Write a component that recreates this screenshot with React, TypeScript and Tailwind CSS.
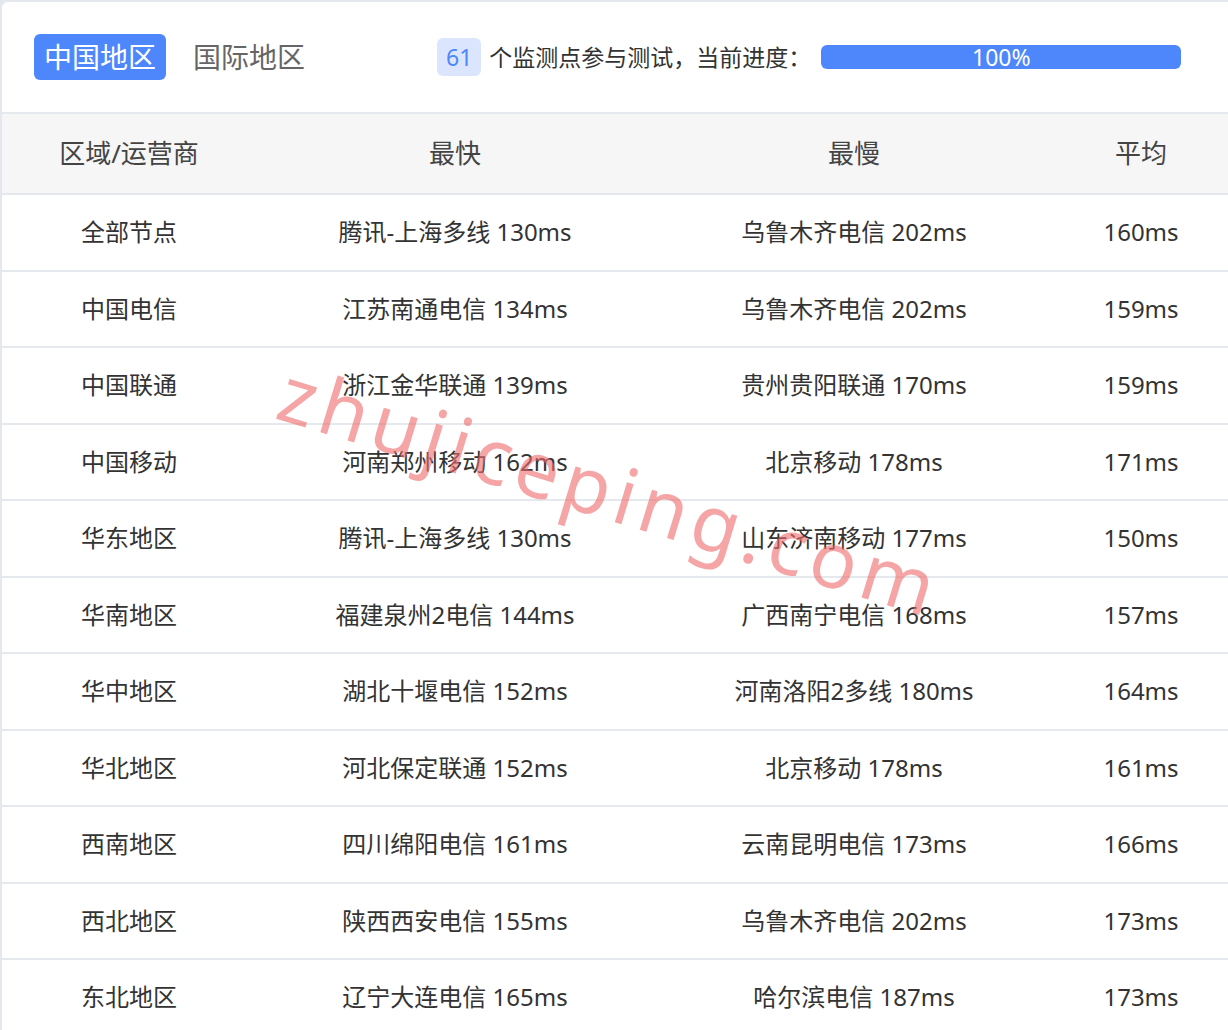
const rows = [
  ["全部节点", "腾讯-上海多线 130ms", "乌鲁木齐电信 202ms", "160ms"],
  ["中国电信", "江苏南通电信 134ms", "乌鲁木齐电信 202ms", "159ms"],
  ["中国联通", "浙江金华联通 139ms", "贵州贵阳联通 170ms", "159ms"],
  ["中国移动", "河南郑州移动 162ms", "北京移动 178ms", "171ms"],
  ["华东地区", "腾讯-上海多线 130ms", "山东济南移动 177ms", "150ms"],
  ["华南地区", "福建泉州2电信 144ms", "广西南宁电信 168ms", "157ms"],
  ["华中地区", "湖北十堰电信 152ms", "河南洛阳2多线 180ms", "164ms"],
  ["华北地区", "河北保定联通 152ms", "北京移动 178ms", "161ms"],
  ["西南地区", "四川绵阳电信 161ms", "云南昆明电信 173ms", "166ms"],
  ["西北地区", "陕西西安电信 155ms", "乌鲁木齐电信 202ms", "173ms"],
  ["东北地区", "辽宁大连电信 165ms", "哈尔滨电信 187ms", "173ms"],
];

const cols = "grid grid-cols-[254px_398px_400px_1fr] items-center text-center";

export default function App() {
  return (
    <div
      className="relative h-[1030px] w-[1228px] overflow-hidden bg-[#e4e8ee] pl-[2px] pt-[2px]"
      style={{ fontFamily: '"Noto Sans", "Noto Sans CJK SC", sans-serif' }}
    >
      <div className="h-full rounded-tl-md bg-white">
        <div className="flex h-[110px] items-center px-[32px]">
          <span className="rounded-md bg-[#4d87fb] px-[10px] py-[2px] text-[28px] text-white">中国地区</span>
          <span className="ml-[27px] text-[28px] text-[#666]">国际地区</span>
          <div className="ml-[132px] flex items-center">
            <span className="rounded-md bg-[#dbe6fe] px-[9px] py-[4px] text-[23px] leading-[30px] text-[#4d87fb]">61</span>
            <span className="ml-[8px] text-[23px] text-[#333]">个监测点参与测试，当前进度：</span>
            <div className="ml-[10px] flex h-[24px] w-[360px] items-center justify-center rounded-md bg-[#4d87fb] text-[23px] leading-none text-white">
              100%
            </div>
          </div>
        </div>
        <div className={`${cols} h-[83px] border-y-2 border-[#e5e8ec] bg-[#f6f6f6] text-[26px] text-[#444]`}>
          <div>区域/运营商</div>
          <div>最快</div>
          <div>最慢</div>
          <div>平均</div>
        </div>
        {rows.map((r) => (
          <div key={r[0]} className={`${cols} h-[76.5px] border-b-2 border-[#e5e8ec] text-[24px] text-[#333]`}>
            {r.map((c, i) => (
              <div key={i}>{c}</div>
            ))}
          </div>
        ))}
      </div>
      <div className="pointer-events-none absolute left-[282px] top-[350px] origin-left rotate-[17deg] text-[78px] leading-none tracking-[6px] text-[#f06a6a] opacity-60">
        zhujiceping.com
      </div>
    </div>
  );
}
